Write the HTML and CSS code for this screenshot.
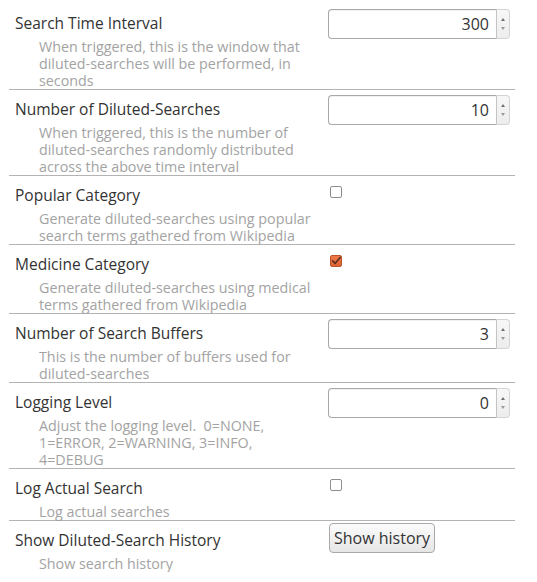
FILE: index.html
```html
<!DOCTYPE html>
<html>
<head>
<meta charset="utf-8">
<link rel="stylesheet" href="styles.css">
</head>
<body>
<div class="prefs">
  <div class="row">
    <div class="label">
      <div class="title">Search Time Interval</div>
      <div class="desc">When triggered, this is the window that diluted-searches will be performed, in seconds</div>
    </div>
    <div class="control">
      <div class="spin"><input class="spin-field" type="text" value="300" readonly><div class="spin-btns"><span class="up"></span><span class="down"></span></div></div>
    </div>
  </div>
  <div class="row">
    <div class="label">
      <div class="title">Number of Diluted-Searches</div>
      <div class="desc">When triggered, this is the number of diluted-searches randomly distributed across the above time interval</div>
    </div>
    <div class="control">
      <div class="spin"><input class="spin-field" type="text" value="10" readonly><div class="spin-btns"><span class="up"></span><span class="down"></span></div></div>
    </div>
  </div>
  <div class="row">
    <div class="label">
      <div class="title">Popular Category</div>
      <div class="desc">Generate diluted-searches using popular search terms gathered from Wikipedia</div>
    </div>
    <div class="control">
      <span class="check"></span>
    </div>
  </div>
  <div class="row">
    <div class="label">
      <div class="title">Medicine Category</div>
      <div class="desc">Generate diluted-searches using medical terms gathered from Wikipedia</div>
    </div>
    <div class="control">
      <span class="check checked"><svg viewBox="0 0 12 12" width="12" height="12"><path d="M2.6 5.8 L5 8.4 L10.2 2.4" fill="none" stroke="#5a2e1e" stroke-width="1.6" stroke-linecap="round" stroke-linejoin="round"/></svg></span>
    </div>
  </div>
  <div class="row">
    <div class="label">
      <div class="title">Number of Search Buffers</div>
      <div class="desc">This is the number of buffers used for diluted-searches</div>
    </div>
    <div class="control">
      <div class="spin"><input class="spin-field" type="text" value="3" readonly><div class="spin-btns"><span class="up"></span><span class="down"></span></div></div>
    </div>
  </div>
  <div class="row">
    <div class="label">
      <div class="title">Logging Level</div>
      <div class="desc">Adjust the logging level.&nbsp; 0=NONE, 1=ERROR, 2=WARNING, 3=INFO, 4=DEBUG</div>
    </div>
    <div class="control">
      <div class="spin"><input class="spin-field" type="text" value="0" readonly><div class="spin-btns"><span class="up"></span><span class="down"></span></div></div>
    </div>
  </div>
  <div class="row">
    <div class="label">
      <div class="title">Log Actual Search</div>
      <div class="desc">Log actual searches</div>
    </div>
    <div class="control">
      <span class="check"></span>
    </div>
  </div>
  <div class="row last">
    <div class="label">
      <div class="title">Show Diluted-Search History</div>
      <div class="desc">Show search history</div>
    </div>
    <div class="control control-btn">
      <button class="btn" type="button">Show history</button>
    </div>
  </div>
</div>
</body>
</html>
```
FILE: styles.css
```css
html, body {
  margin: 0;
  padding: 0;
  background: #ffffff;
}
body {
  font-family: "Open Sans", "DejaVu Sans", sans-serif;
  color: #333333;
}
.prefs {
  margin-left: 9px;
  width: 506px;
  padding-top: 4px;
}
.row {
  display: grid;
  grid-template-columns: 319px 1fr;
  border-bottom: 1px solid #b3b3b3;
}
.row.last {
  border-bottom: none;
}
.label {
  padding: 10px 0 0 6px;
}
.title {
  font-size: 15.5px;
  line-height: 19px;
  color: #333333;
}
.desc {
  margin-top: 5px;
  padding-left: 24px;
  font-size: 14.3px;
  line-height: 17px;
  color: #a3a3a3;
  width: 274px;
}
.control {
  padding-top: 5px;
}
.control-btn {
  padding-top: 2px;
}
.spin {
  display: flex;
  height: 30px;
}
.spin-field {
  box-sizing: border-box;
  width: 169px;
  height: 30px;
  border: 1px solid #a8a8a8;
  border-radius: 4px 0 0 4px;
  border-right: 1px solid #c4c4c4;
  padding: 0 7px 0 4px;
  text-align: right;
  font-family: "Open Sans", "DejaVu Sans", sans-serif;
  font-size: 16px;
  color: #333333;
  background: #ffffff;
  outline: none;
  box-shadow: inset 0 1px 1px rgba(0,0,0,0.06);
}
.spin-btns {
  box-sizing: border-box;
  width: 13px;
  height: 30px;
  border: 1px solid #d4d4d4;
  border-left: none;
  border-radius: 0 4px 4px 0;
  background: linear-gradient(#f7f7f7, #ededed);
  display: flex;
  flex-direction: column;
  align-items: center;
  justify-content: center;
  gap: 6px;
}
.spin-btns .up {
  width: 0;
  height: 0;
  border-left: 2.5px solid transparent;
  border-right: 2.5px solid transparent;
  border-bottom: 3px solid #6f6f6f;
}
.spin-btns .down {
  width: 0;
  height: 0;
  border-left: 2.5px solid transparent;
  border-right: 2.5px solid transparent;
  border-top: 3px solid #9a9a9a;
}
.check {
  display: block;
  box-sizing: border-box;
  width: 12px;
  height: 12px;
  margin: 5px 0 0 2px;
  border: 1px solid #8f8f8f;
  border-radius: 2px;
  background: #ffffff;
}
.check.checked {
  border-color: #b8532c;
  background: linear-gradient(#f07a4a, #df6234);
  position: relative;
}
.check.checked svg {
  position: absolute;
  left: -1px;
  top: -1px;
}
.btn {
  margin: 0 0 0 1px;
  height: 30px;
  padding: 0 4px;
  font-family: "Open Sans", "DejaVu Sans", sans-serif;
  font-size: 16px;
  color: #333333;
  border: 1px solid #a9a9a9;
  border-radius: 4px;
  background: linear-gradient(#fbfbfb, #e6e6e6);
}
```
